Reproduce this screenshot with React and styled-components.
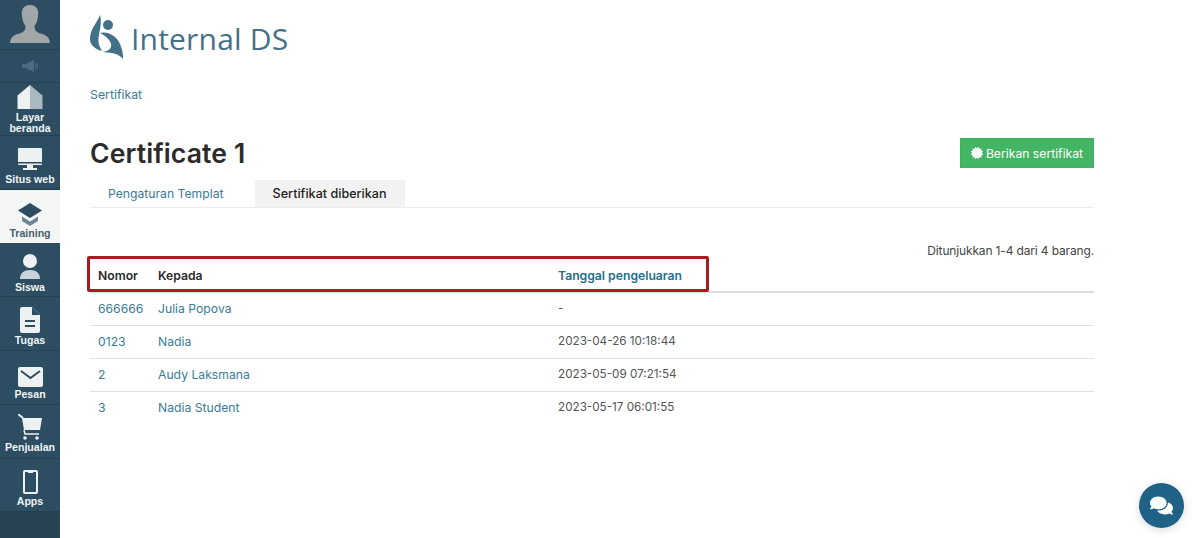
import styled, { createGlobalStyle } from "styled-components"
import { FaCertificate, FaComments } from "react-icons/fa"

const GlobalStyle = createGlobalStyle`
  html, body {
    margin: 0;
    padding: 0;
    height: 100%;
    background: #fff;
  }
  body {
    font-family: Inter, "Open Sans", sans-serif;
    overflow: hidden;
  }
`

const Page = styled.div`
  display: flex;
  width: 1200px;
  height: 538px;
  overflow: hidden;
`

const Sidebar = styled.nav`
  width: 60px;
  flex-shrink: 0;
  background: #2a4354;
  display: flex;
  flex-direction: column;
`

const Avatar = styled.div`
  height: 50px;
  background: #2c4d62;
  border-bottom: 1px solid #24404f;
  display: flex;
  justify-content: center;
  align-items: flex-start;
  padding-top: 5px;
  box-sizing: border-box;
  flex-shrink: 0;
`

const Speaker = styled.div`
  height: 33px;
  background: #2c4d62;
  border-bottom: 1px solid #24404f;
  display: flex;
  justify-content: center;
  align-items: center;
  box-sizing: border-box;
  flex-shrink: 0;
`

const NavItem = styled.a`
  height: ${p => p.$h || 54}px;
  flex-shrink: 0;
  box-sizing: border-box;
  display: flex;
  flex-direction: column;
  align-items: center;
  justify-content: flex-end;
  padding-bottom: ${p => p.$pb ?? 5}px;
  background: ${p => (p.$active ? "#f4f5f5" : "#2c4d62")};
  color: ${p => (p.$active ? "#4a5f6c" : "#f1f4f5")};
  border-bottom: 1px solid ${p => (p.$active ? "#f4f5f5" : "#24404f")};
  font-family: "Liberation Sans", Arial, sans-serif;
  font-size: 10.6px;
  font-weight: 700;
  line-height: 10.5px;
  text-align: center;
  white-space: nowrap;
`

const NavIcon = styled.svg`
  display: block;
  margin-bottom: 2px;
`

const NavLabel = styled.span`
  display: block;
`

const Main = styled.main`
  flex: 1;
  padding: 0 106px 0 30px;
  min-width: 0;
`

const LogoRow = styled.div`
  display: flex;
  align-items: center;
  gap: 7px;
  height: 44px;
  margin-top: 15px;
`

const LogoText = styled.span`
  font-family: "Open Sans", sans-serif;
  font-size: 30px;
  font-weight: 500;
  line-height: 44px;
  color: #43718a;
  letter-spacing: 0.2px;
  padding-top: 4px;
`

const Breadcrumb = styled.a`
  display: block;
  margin-top: 27px;
  font-size: 12.3px;
  line-height: 18px;
  color: #3a7b96;
`

const TitleRow = styled.div`
  display: flex;
  justify-content: space-between;
  align-items: center;
  margin-top: 30px;
  height: 38px;
`

const Title = styled.h1`
  margin: 0;
  font-size: 26.6px;
  line-height: 38px;
  font-weight: 600;
  color: #2b2b2b;
  letter-spacing: 0.1px;
`

const GrantButton = styled.button`
  width: 134px;
  height: 30px;
  border: 1px solid #3fb061;
  border-radius: 0;
  padding: 0;
  background: #44b565;
  color: #fff;
  font-family: inherit;
  font-size: 12.2px;
  display: flex;
  align-items: center;
  justify-content: center;
  gap: 3px;
`

const Tabs = styled.div`
  display: flex;
  margin-top: 8px;
  height: 27px;
  border-bottom: 1px solid #e9ecee;
`

const Tab = styled.a`
  height: 27px;
  box-sizing: border-box;
  padding: 0 18px;
  display: flex;
  align-items: center;
  font-size: ${p => (p.$active ? 12.6 : 12.2)}px;
  font-weight: ${p => (p.$active ? 500 : 400)};
  color: ${p => (p.$active ? "#222" : "#3a7b96")};
  background: ${p => (p.$active ? "#f2f2f2" : "transparent")};
  margin-right: ${p => (p.$active ? 0 : 13)}px;
`

const Summary = styled.div`
  margin-top: 34px;
  height: 18px;
  line-height: 18px;
  text-align: right;
  font-size: 12px;
  letter-spacing: -0.15px;
  color: #444;
`

const TableWrap = styled.div`
  position: relative;
  margin-top: -2px;
`

const Table = styled.table`
  width: 100%;
  border-collapse: collapse;
  table-layout: fixed;
  font-size: 12.2px;
`

const Th = styled.th`
  box-sizing: border-box;
  height: 34px;
  padding: 2px 8px 0;
  text-align: left;
  font-weight: 600;
  color: ${p => (p.$link ? "#1f6f8f" : "#2b2b2b")};
  border-bottom: 2px solid #dcdfe1;
  width: ${p => p.$w || "auto"};
`

const Td = styled.td`
  box-sizing: border-box;
  height: 33px;
  padding: 0 8px 1px;
  color: ${p => (p.$link ? "#3a7b96" : "#555")};
  font-size: ${p => (p.$date ? 11.7 : 12.2)}px;
  border-bottom: ${p => (p.$last ? "none" : "1px solid #dfe2e4")};
`

const Highlight = styled.div`
  position: absolute;
  left: -3px;
  top: -2px;
  width: 622px;
  height: 36px;
  box-sizing: border-box;
  border: 3px solid #a81c1f;
  border-radius: 2px;
  pointer-events: none;
`

const ChatBubble = styled.button`
  position: absolute;
  left: 1139px;
  top: 483px;
  width: 45px;
  height: 45px;
  border: none;
  border-radius: 50%;
  padding: 0;
  background: #1f6285;
  color: #fff;
  font-size: 23px;
  box-shadow: 0 2px 8px rgba(0, 0, 0, 0.15);
  display: flex;
  align-items: center;
  justify-content: center;
`

const Logo = () => (
  <svg width="34" height="44" viewBox="0 0 34 44">
    <path d="M10 0 C7 8 0 14 0 24 C0 30 5 34 12 36 C9 31 7.500 26 9 20 C10 14 12 7 10 0 Z" fill="#43718a" />
    <circle cx="18" cy="10" r="5" fill="#43718a" />
    <path d="M10 18 C17 16 26 20 30 29 C32 34 33.500 39 33 44 C29 39 24 38 13 37 C19 36 22 33 21 29 C20 25 16 21 10 18 Z" fill="#43718a" />
  </svg>
)

const rows = [
  { no: "666666", to: "Julia Popova", date: "-" },
  { no: "0123", to: "Nadia", date: "2023-04-26 10:18:44" },
  { no: "2", to: "Audy Laksmana", date: "2023-05-09 07:21:54" },
  { no: "3", to: "Nadia Student", date: "2023-05-17 06:01:55" },
]

const App = () => {
  return (
    <Page>
      <GlobalStyle />
      <Sidebar>
        <Avatar>
          <svg width="40" height="38" viewBox="0 0 40 38">
            <path
              d="M20 0 C13 0 11 5 12 11 C12.500 16 14 19 15.500 21 C15.500 24 15 26 12 27.500 C8 29.500 1 29 0 38 L40 38 C39 29 32 29.500 28 27.500 C25 26 24.500 24 24.500 21 C26 19 27.500 16 28 11 C29 5 27 0 20 0 Z"
              fill="#a1a6a8"
            />
          </svg>
        </Avatar>
        <Speaker>
          <svg width="18" height="14" viewBox="0 0 18 14">
            <path d="M1 5 H5 L13 1 V13 L5 9 H1 Z" fill="#4c6b7e" />
            <rect x="14" y="4" width="3" height="6" rx="1" fill="#42616f" />
          </svg>
        </Speaker>
        <NavItem $h={53} $pb={2}>
          <NavIcon width="26" height="25" viewBox="0 0 26 26">
            <path d="M13 0 L0 11 V25 H13 Z" fill="#eef1f2" />
            <path d="M13 0 L26 11 V25 H13 Z" fill="#a9b8c1" />
          </NavIcon>
          <NavLabel>Layar</NavLabel>
          <NavLabel>beranda</NavLabel>
        </NavItem>
        <NavItem $h={54}>
          <NavIcon width="24" height="24" viewBox="0 0 24 24">
            <rect x="0" y="0" width="24" height="17" rx="1" fill="#eef1f2" />
            <rect x="0" y="14" width="24" height="1.500" fill="#2c4d62" />
            <path d="M9 17 H15 V20 H19 V22 H5 V20 H9 Z" fill="#eef1f2" />
          </NavIcon>
          <NavLabel>Situs web</NavLabel>
        </NavItem>
        <NavItem $h={53} $pb={4} $active>
          <NavIcon width="26" height="23" viewBox="0 0 26 23">
            <path d="M13 0 L25 7.500 L13 15 L1 7.500 Z" fill="#2c4d62" />
            <path d="M5 13.500 L13 18.500 L21 13.500 V18 L13 23 L5 18 Z" fill="#6d8797" />
          </NavIcon>
          <NavLabel>Training</NavLabel>
        </NavItem>
        <NavItem $h={54} $pb={4}>
          <NavIcon width="22" height="26" viewBox="0 0 22 26">
            <circle cx="11" cy="7" r="7" fill="#eef1f2" />
            <path d="M1 25 C1 19 5 16 11 16 C17 16 21 19 21 25 Z" fill="#c9d3d9" />
          </NavIcon>
          <NavLabel>Siswa</NavLabel>
        </NavItem>
        <NavItem $h={54}>
          <NavIcon width="20" height="26" viewBox="0 0 20 26">
            <path d="M2 0 H12 L20 8 V24 Q20 26 18 26 H2 Q0 26 0 24 V2 Q0 0 2 0 Z" fill="#eef1f2" />
            <path d="M12 0 V8 H20 Z" fill="#2c4d62" />
            <rect x="5" y="13" width="10" height="2" fill="#2c4d62" />
            <rect x="5" y="18" width="10" height="2" fill="#2c4d62" />
          </NavIcon>
          <NavLabel>Tugas</NavLabel>
        </NavItem>
        <NavItem $h={54}>
          <NavIcon width="25" height="20" viewBox="0 0 25 20">
            <rect width="25" height="20" rx="2" fill="#eef1f2" />
            <path d="M3 4 L12.500 11 L22 4" fill="none" stroke="#2c4d62" strokeWidth="2" />
          </NavIcon>
          <NavLabel>Pesan</NavLabel>
        </NavItem>
        <NavItem $h={54} $pb={6}>
          <NavIcon width="24" height="26" viewBox="0 0 24 26">
            <path d="M0 0 L5 4" fill="none" stroke="#eef1f2" strokeWidth="2" />
            <path d="M4 4 H24 L22 16 H6 Z" fill="#eef1f2" />
            <path d="M6 16 L7 20 H21" fill="none" stroke="#eef1f2" strokeWidth="1.500" />
            <circle cx="7" cy="24" r="1.800" fill="#eef1f2" />
            <circle cx="19" cy="24" r="1.800" fill="#eef1f2" />
          </NavIcon>
          <NavLabel>Penjualan</NavLabel>
        </NavItem>
        <NavItem $h={53}>
          <NavIcon width="15" height="24" viewBox="0 0 15 24">
            <rect x="1" y="1" width="13" height="22" rx="1" fill="none" stroke="#eef1f2" strokeWidth="2" />
            <rect x="5" y="1" width="5" height="2" fill="#eef1f2" />
          </NavIcon>
          <NavLabel>Apps</NavLabel>
        </NavItem>
      </Sidebar>

      <Main>
        <LogoRow>
          <Logo />
          <LogoText>Internal DS</LogoText>
        </LogoRow>
        <Breadcrumb>Sertifikat</Breadcrumb>
        <TitleRow>
          <Title>Certificate 1</Title>
          <GrantButton>
            <FaCertificate size={12} />
            Berikan sertifikat
          </GrantButton>
        </TitleRow>
        <Tabs>
          <Tab>Pengaturan Templat</Tab>
          <Tab $active>Sertifikat diberikan</Tab>
        </Tabs>
        <Summary>Ditunjukkan 1-4 dari 4 barang.</Summary>
        <TableWrap>
          <Table>
            <thead>
              <tr>
                <Th $w="60px">Nomor</Th>
                <Th $w="400px">Kepada</Th>
                <Th $link>Tanggal pengeluaran</Th>
              </tr>
            </thead>
            <tbody>
              {rows.map((row, i) => (
                <tr key={row.no}>
                  <Td $link $last={i === rows.length - 1}>{row.no}</Td>
                  <Td $link $last={i === rows.length - 1}>{row.to}</Td>
                  <Td $date $last={i === rows.length - 1}>{row.date}</Td>
                </tr>
              ))}
            </tbody>
          </Table>
          <Highlight />
        </TableWrap>
      </Main>

      <ChatBubble aria-label="Chat">
        <FaComments />
      </ChatBubble>
    </Page>
  )
}

export default App
